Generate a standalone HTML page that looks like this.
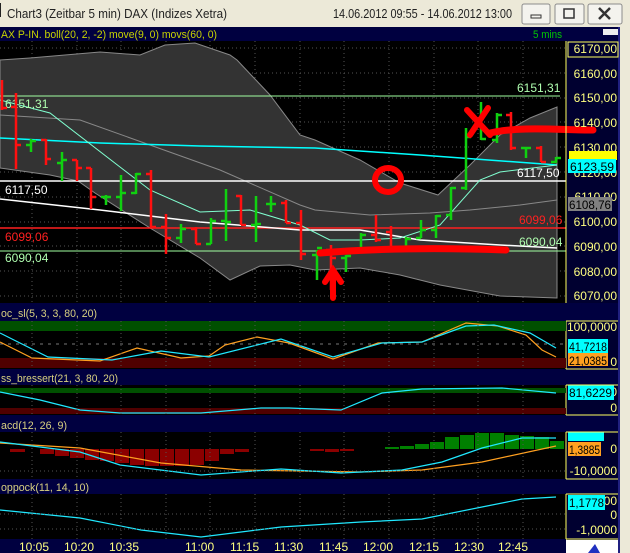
<!DOCTYPE html>
<html><head><meta charset="utf-8"><style>
body{margin:0;width:630px;height:553px;overflow:hidden;background:#000;font-family:"Liberation Sans",sans-serif}
svg{display:block}
</style></head><body>
<svg width="630" height="553" viewBox="0 0 630 553" xmlns="http://www.w3.org/2000/svg" font-family="Liberation Sans, sans-serif">
<rect x="0" y="0" width="630" height="27" fill="#ece9d8"/>
<text x="7" y="18" font-size="13" fill="#222" textLength="220" lengthAdjust="spacingAndGlyphs">Chart3 (Zeitbar 5 min)  DAX (Indizes Xetra)</text>
<text x="333" y="18" font-size="13" fill="#222" textLength="179" lengthAdjust="spacingAndGlyphs">14.06.2012 09:55 - 14.06.2012 13:00</text>
<g fill="#f4f3ee" stroke="#8c8c8c"><rect x="522" y="4" width="28" height="20" rx="2"/><rect x="555" y="4" width="29" height="20" rx="2"/><rect x="588" y="4" width="34" height="20" rx="2"/></g>
<rect x="531" y="15" width="10" height="3" fill="none" stroke="#333"/>
<rect x="564" y="9" width="10" height="9" fill="none" stroke="#333" stroke-width="1.5"/>
<path d="M599 8l11 11M610 8l-11 11" stroke="#333" stroke-width="2.5"/>
<path d="M0 3v14" stroke="#222" stroke-width="2"/>
<rect x="0" y="27" width="630" height="14" fill="#000040"/>
<text x="1" y="38" font-size="11" fill="#c8d400" textLength="216" lengthAdjust="spacingAndGlyphs">AX P-IN. boll(20, 2, -2) move(9, 0) movs(60, 0)</text>
<text x="533" y="38" font-size="11" fill="#00c800" textLength="29" lengthAdjust="spacingAndGlyphs">5 mins</text>
<rect x="603" y="29" width="15" height="6" fill="#eee"/>
<rect x="566" y="41" width="52" height="499" fill="#000030"/>
<rect x="618" y="27" width="2" height="526" fill="#202080"/>
<rect x="620" y="27" width="10" height="526" fill="#ece9d8"/>
<rect x="0" y="41" width="566" height="262" fill="#000"/>
<g stroke="#555" stroke-dasharray="1,3" stroke-width="1">
<path d="M32 41V303M77 41V303M121 41V303M166 41V303M210 41V303M255 41V303M300 41V303M344 41V303M389 41V303M434 41V303M478 41V303M523 41V303"/>
<path d="M0 48H566M0 73H566M0 98H566M0 122H566M0 147H566M0 172H566M0 197H566M0 222H566M0 246H566M0 271H566M0 296H566"/>
</g>
<polygon points="0,60 30,58 100,52 140,55 165,45 195,43 230,55 237,60 270,95 300,135 315,140 360,160 400,183 438,195 470,165 500,135 530,118 557,107 557,298 500,296 440,285 400,275 360,268 315,270 290,265 260,266 230,280 200,258 150,228 95,193 78,181 50,175 0,168" fill="#333" stroke="#888" stroke-width="1"/>
<polyline points="0,115 80,120 150,145 220,170 300,205 315,210 370,215 430,213 470,210 520,205 557,200" fill="none" stroke="#888"/>
<path d="M0 96H560" stroke="#a0ffa0"/>
<path d="M0 181H566" stroke="#fff" stroke-width="1.5"/>
<path d="M0 228H566" stroke="#ff2020" stroke-width="1.5"/>
<path d="M0 251H566" stroke="#a0ffa0"/>
<polyline points="0,138 100,143 200,146 315,148 420,155 557,165" fill="none" stroke="#00ffff" stroke-width="1.5"/>
<polyline points="0,199 100,210 200,222 300,230 360,230 420,240 500,245 557,248" fill="none" stroke="#fff" stroke-width="1.5"/>
<polyline points="0,100 50,113 120,167 150,190 200,212 250,210 300,225 330,240 360,240 400,238 440,225 480,180 500,172 557,165" fill="none" stroke="#80ffd0"/>
<g font-size="12">
<text x="5" y="108" fill="#b0ffb0">6151,31</text><text x="517" y="92" fill="#b0ffb0">6151,31</text>
<text x="5" y="194" fill="#fff">6117,50</text><text x="517" y="177" fill="#fff">6117,50</text>
<text x="5" y="241" fill="#ff2020">6099,06</text><text x="519" y="224" fill="#ff2020">6099,06</text>
<text x="5" y="262" fill="#b0ffb0">6090,04</text><text x="519" y="246" fill="#b0ffb0">6090,04</text>
</g>
<g stroke-width="2.5" fill="none">
<path stroke="#ff1010" d="M2 80V110M2 108h5M16 93V169M16 107h-5M16 145h5M46 139V165M46 140h-5M46 159h5M77 160V181M77 160h-5M77 168h5M91 168V209M91 168h-5M91 197h5M151 170V228M151 174h-5M151 227h5M166 214V254M166 227h-5M166 238h5M196 227V244M196 229h-5M196 244h5M241 195V225M241 196h-5M241 225h5M286 200V223M286 203h-5M286 223h5M301 210V260M301 223h-5M301 254h5M331 245V290M331 250h-5M331 258h5M376 215V242M376 235h-5M376 240h5M391 226V250M391 232h-5M391 248h5M511 112V150M511 115h-5M511 148h5M541 146V162M541 148h-5M541 162h5"/>
<path stroke="#10d010" d="M31 139V152M31 145h-5M31 141h5M62 152V181M62 163h-5M62 160h5M106 195V205M106 197h-5M106 197h5M121 175V211M121 197h-5M121 193h5M136 173V194M136 193h-5M136 174h5M181 224V243M181 238h-5M181 229h5M211 218V244M211 244h-5M211 221h5M226 189V241M226 221h-5M226 222h5M256 196V242M256 225h-5M256 224h5M271 196V212M271 204h-5M271 204h5M317 250V280M317 255h-5M317 248h5M346 255V272M346 258h-5M346 256h5M361 233V250M361 251h-5M361 235h5M406 237V249M406 248h-5M406 239h5M421 220V238M421 238h-5M421 230h5M436 215V238M436 230h-5M436 216h5M451 187V220M451 215h-5M451 188h5M466 128V190M466 188h-5M466 137h5M481 102V140M481 139h5M497 113V143M497 140h-5M497 115h5M526 147V158M526 148h-5M526 148h5M556 157V163M556 162h-5M556 158h5"/>
</g>
<g stroke="#ff0000" stroke-linecap="round" fill="none">
<path d="M467 110L490 135M488 108L470 135" stroke-width="6"/>
<path d="M490 133C520 126 560 130 593 130" stroke-width="7"/>
<ellipse cx="388" cy="180" rx="13" ry="12" stroke-width="6"/>
<path d="M320 253C380 248 450 248 506 250" stroke-width="7"/>
<path d="M333 298V272M325 282L333 270L341 282" stroke-width="6"/>
</g>
<path d="M566 41V540" stroke="#ffff60"/>
<g font-size="12" fill="#ffff80" text-anchor="end">
<text x="617" y="53">6170,00</text><text x="617" y="78">6160,00</text><text x="617" y="102">6150,00</text><text x="617" y="127">6140,00</text><text x="617" y="152">6130,00</text><text x="617" y="177">6120,00</text><text x="617" y="201">6110,00</text><text x="617" y="226">6100,00</text><text x="617" y="251">6090,00</text><text x="617" y="276">6080,00</text><text x="617" y="300">6070,00</text>
</g>
<rect x="568" y="42" width="50" height="15" fill="none" stroke="#ffff60"/>
<rect x="569" y="151" width="48" height="9" fill="#ffff00"/>
<rect x="568" y="159" width="48" height="14" fill="#00ffff"/><text x="570" y="171" font-size="12" fill="#000" textLength="44" lengthAdjust="spacingAndGlyphs">6123,59</text>
<rect x="568" y="197" width="44" height="14" fill="#808080"/><text x="569" y="209" font-size="12" fill="#000" textLength="42" lengthAdjust="spacingAndGlyphs">6108,76</text>
<g fill="#000040"><rect x="0" y="303" width="618" height="18"/><rect x="0" y="369" width="618" height="16"/><rect x="0" y="415" width="618" height="17"/><rect x="0" y="479" width="618" height="15"/><rect x="0" y="539" width="566" height="14"/></g>
<g font-size="11" fill="#d8d080">
<text x="1" y="317" textLength="96" lengthAdjust="spacingAndGlyphs">oc_sl(5, 3, 3, 80, 20)</text>
<text x="1" y="382" textLength="117" lengthAdjust="spacingAndGlyphs">ss_bressert(21, 3, 80, 20)</text>
<text x="1" y="429" textLength="66" lengthAdjust="spacingAndGlyphs">acd(12, 26, 9)</text>
<text x="1" y="491" textLength="88" lengthAdjust="spacingAndGlyphs">oppock(11, 14, 10)</text>
</g>
<rect x="0" y="321" width="566" height="10" fill="#005000"/>
<rect x="0" y="358" width="566" height="10" fill="#500000"/>
<path d="M0 344H566" stroke="#777" stroke-dasharray="3,5"/>
<polyline points="0,342 32,358 100,361 137,348 181,358 209,356 225,345 257,337 289,343 333,359 378,343 422,342 466,323 498,326 526,335 542,350 556,357" fill="none" stroke="#ffa020" stroke-width="1.2"/>
<polyline points="0,333 48,357 112,360 161,351 209,357 281,339 333,357 382,343 422,342 466,326 494,325 530,333 556,348" fill="none" stroke="#20e8ff" stroke-width="1.2"/>
<rect x="0" y="388" width="566" height="5" fill="#005000"/>
<rect x="0" y="408" width="566" height="6" fill="#500000"/>
<polyline points="0,392 40,400 80,410 120,413 201,413 261,408 289,408 341,410 382,393 422,389 502,388 556,393" fill="none" stroke="#20e8ff" stroke-width="1.2"/>
<g fill="#8b0000">
<rect x="10" y="449" width="15" height="3"/><rect x="40" y="449" width="14" height="5"/><rect x="55" y="449" width="14" height="7"/><rect x="70" y="449" width="14" height="9"/><rect x="85" y="449" width="14" height="11"/><rect x="100" y="449" width="14" height="12"/><rect x="115" y="449" width="14" height="14"/><rect x="130" y="449" width="14" height="16"/><rect x="145" y="449" width="14" height="17"/><rect x="160" y="449" width="14" height="17"/><rect x="175" y="449" width="14" height="17"/><rect x="190" y="449" width="14" height="16"/><rect x="205" y="449" width="14" height="12"/><rect x="220" y="449" width="14" height="5"/><rect x="235" y="449" width="14" height="3"/><rect x="310" y="449" width="14" height="2"/><rect x="325" y="449" width="14" height="3"/><rect x="340" y="449" width="14" height="2"/>
</g>
<g fill="#008000">
<rect x="385" y="447" width="14" height="2"/><rect x="400" y="446" width="14" height="3"/><rect x="415" y="444" width="14" height="5"/><rect x="430" y="442" width="14" height="7"/><rect x="445" y="437" width="14" height="12"/><rect x="460" y="435" width="14" height="14"/><rect x="475" y="433" width="14" height="16"/><rect x="490" y="433" width="14" height="16"/><rect x="505" y="435" width="14" height="14"/><rect x="520" y="436" width="14" height="13"/><rect x="535" y="437" width="14" height="12"/><rect x="550" y="441" width="14" height="8"/>
</g>
<polyline points="0,443 80,448 161,463 241,470 361,472 422,470 482,462 556,446" fill="none" stroke="#ffa020" stroke-width="1.2"/>
<polyline points="0,442 80,452 120,465 201,475 281,469 341,473 402,470 442,462 482,448 522,438 556,438" fill="none" stroke="#20e8ff" stroke-width="1.2"/>
<polyline points="0,510 80,518 141,530 201,537 281,527 361,522 422,519 482,507 522,499 556,497" fill="none" stroke="#20e8ff" stroke-width="1.2"/>
<g stroke="#555" stroke-dasharray="1,3">
<path d="M32 321V369M77 321V369M121 321V369M166 321V369M210 321V369M255 321V369M300 321V369M344 321V369M389 321V369M434 321V369M478 321V369M523 321V369"/>
<path d="M32 385V415M77 385V415M121 385V415M166 385V415M210 385V415M255 385V415M300 385V415M344 385V415M389 385V415M434 385V415M478 385V415M523 385V415"/>
<path d="M32 432V479M77 432V479M121 432V479M166 432V479M210 432V479M255 432V479M300 432V479M344 432V479M389 432V479M434 432V479M478 432V479M523 432V479"/>
<path d="M32 494V539M77 494V539M121 494V539M166 494V539M210 494V539M255 494V539M300 494V539M344 494V539M389 494V539M434 494V539M478 494V539M523 494V539"/>
<path d="M0 471H566M0 514H566M0 529H566"/>
</g>
<g font-size="12" fill="#ffff80" text-anchor="end">
<text x="617" y="331">100,0000</text><text x="617" y="366">0</text>
<text x="617" y="396">0</text><text x="617" y="412">0</text>
<text x="617" y="453">0</text><text x="617" y="475">-10,0000</text>
<text x="617" y="505">00</text><text x="617" y="519">0</text><text x="617" y="534">-1,0000</text>
</g>
<g font-size="12" fill="#000">
<rect x="568" y="339" width="40" height="14" fill="#00ffff"/><text x="569" y="351" textLength="38" lengthAdjust="spacingAndGlyphs">41,7218</text>
<rect x="568" y="353" width="40" height="13" fill="#ffa020"/><text x="569" y="365" textLength="38" lengthAdjust="spacingAndGlyphs">21,0385</text>
<rect x="568" y="385" width="46" height="15" fill="#00ffff"/><text x="569" y="397" textLength="43" lengthAdjust="spacingAndGlyphs">81,6229</text>
<rect x="568" y="432" width="36" height="9" fill="#00ffff"/>
<rect x="568" y="442" width="33" height="14" fill="#ffa020"/><text x="569" y="454" textLength="31" lengthAdjust="spacingAndGlyphs">1,3885</text>
<rect x="568" y="495" width="37" height="15" fill="#00ffff"/><text x="569" y="507" textLength="35" lengthAdjust="spacingAndGlyphs">1,1778</text>
</g>
<g fill="none" stroke="#ffff60"><path d="M566 321H618M566 369H618M566 385H618M566 415H618M566 432H618M566 479H618M566 494H618M566 539H618"/></g>
<g font-size="12" fill="#ffff80">
<text x="19" y="551">10:05</text><text x="64" y="551">10:20</text><text x="109" y="551">10:35</text><text x="185" y="551">11:00</text><text x="230" y="551">11:15</text><text x="274" y="551">11:30</text><text x="319" y="551">11:45</text><text x="363" y="551">12:00</text><text x="409" y="551">12:15</text><text x="454" y="551">12:30</text><text x="498" y="551">12:45</text>
</g>
<rect x="566" y="540" width="52" height="13" fill="#fff"/>
<path d="M588 553L595 544L600 553Z" fill="#2030c0"/>
</svg>
</body></html>
